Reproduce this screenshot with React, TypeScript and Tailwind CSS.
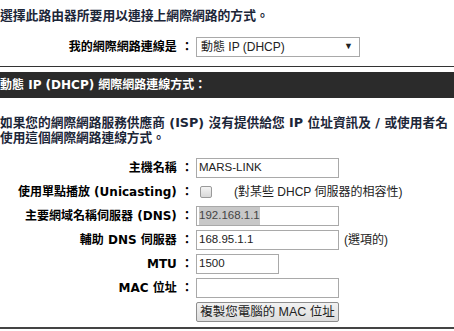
import React from "react";

const cjk = "font-['DejaVu_Sans','Noto_Sans_CJK_TC',sans-serif]";
const field = "font-['Liberation_Sans','Noto_Sans_CJK_TC',sans-serif]";

function Box({ w, children }: { w: string; children?: React.ReactNode }) {
  return (
    <div className={`${w} h-[20px] border border-[#a9a9a9] bg-white px-[2px] flex items-center text-[11.5px] text-[#222] ${field}`}>
      {children}
    </div>
  );
}

function Row({ label, children }: { label: string; children: React.ReactNode }) {
  return (
    <div className="flex items-center h-[20px]">
      <span className="w-[196px] shrink-0 text-right text-[12px] font-bold text-black whitespace-nowrap pr-[3px]">
        {label}
      </span>
      <div className="flex items-center">{children}</div>
    </div>
  );
}

export default function App() {
  return (
    <div className={`w-[454px] h-[331px] bg-white overflow-hidden ${cjk}`}>
      <div className="pt-[8px] text-[12.8px] font-bold leading-[16px] text-[#1c2638] whitespace-nowrap">
        選擇此路由器所要用以連接上網際網路的方式。
      </div>

      <div className="mt-[13px]">
        <Row label="我的網際網路連線是 ：">
          <div className={`w-[164px] h-[20px] border border-[#a9a9a9] bg-white pl-[4px] pr-[6px] flex items-center justify-between text-[12px] text-[#222] ${field}`}>
            <span>動態 IP (DHCP)</span>
            <span className="text-[9px]">▼</span>
          </div>
        </Row>
      </div>

      <div className="mt-[9px] h-px bg-[#333]" />

      <div className="mt-[5px] h-[26px] bg-[#2b2b2b] flex items-center text-[12px] font-bold text-white whitespace-nowrap">
        動態 IP (DHCP) 網際網路連線方式：
      </div>

      <div className="mt-[17px] text-[12.7px] font-bold leading-[15px] text-[#1c2638] whitespace-nowrap">
        <div>如果您的網際網路服務供應商 (ISP) 沒有提供給您 IP 位址資訊及 / 或使用者名</div>
        <div>使用這個網際網路連線方式。</div>
      </div>

      <div className="mt-[13px] flex flex-col gap-[4px]">
        <Row label="主機名稱 ：">
          <Box w="w-[143px]">MARS-LINK</Box>
        </Row>
        <Row label="使用單點播放 (Unicasting) ：">
          <span className="ml-[4px] w-[12px] h-[12px] rounded-[2px] border border-[#9a9a9a] bg-gradient-to-b from-[#f4f4f4] to-[#d8d8d8]" />
          <span className={`ml-[22px] text-[12px] text-[#222] whitespace-nowrap ${field}`}>
            (對某些 DHCP 伺服器的相容性)
          </span>
        </Row>
        <Row label="主要網域名稱伺服器 (DNS) ：">
          <Box w="w-[143px]">
            <span className="bg-[#c8c8c8] text-[#444]">192.168.1.1</span>
          </Box>
        </Row>
        <Row label="輔助 DNS 伺服器 ：">
          <Box w="w-[143px]">168.95.1.1</Box>
          <span className={`ml-[5px] text-[12px] text-[#222] ${field}`}>(選項的)</span>
        </Row>
        <Row label="MTU ：">
          <Box w="w-[83px]">1500</Box>
        </Row>
        <Row label="MAC 位址 ：">
          <Box w="w-[143px]" />
        </Row>
        <Row label="">
          <button className={`w-[143px] h-[20px] border border-[#8e8e8e] rounded-[2px] bg-gradient-to-b from-[#f2f2f2] to-[#dcdcdc] text-[12.5px] text-[#222] ${field}`}>
            複製您電腦的 MAC 位址
          </button>
        </Row>
      </div>

      <div className="mt-[5px] h-[2px] bg-[#444]" />
    </div>
  );
}
